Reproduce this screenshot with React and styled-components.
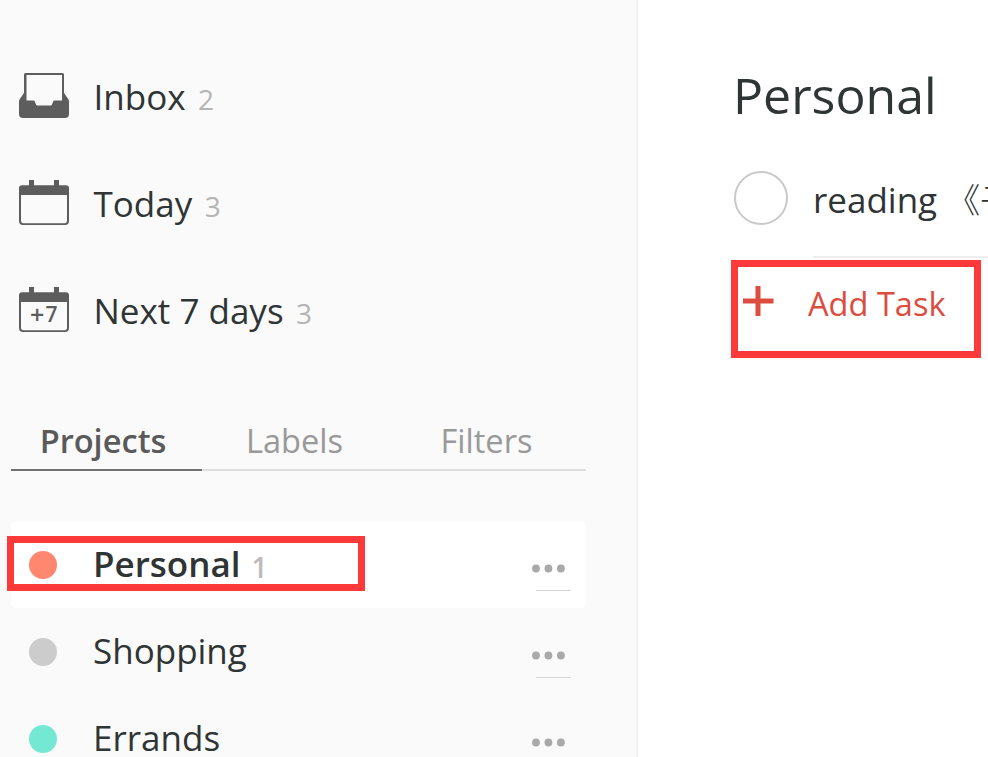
import React from "react";
import styled, { createGlobalStyle } from "styled-components";

const GlobalStyle = createGlobalStyle`
  * { box-sizing: border-box; }
  html, body { margin: 0; padding: 0; background: #fff; overflow: hidden; }
  button { font: inherit; color: inherit; background: none; border: 0; padding: 0; text-align: left; }
`;

const Page = styled.div`
  display: flex;
  width: 988px;
  height: 757px;
  overflow: hidden;
  background: #fff;
  color: #2f3435;
  font-family: "Open Sans", "Noto Sans CJK SC", sans-serif;
  font-size: 35px;
  line-height: 48px;
  white-space: nowrap;
`;

const Sidebar = styled.aside`
  flex: none;
  width: 638px;
  padding: 43px 50px 0 11px;
  background: #fafafa;
  border-right: 2px solid #f1f1f1;
`;

const NavList = styled.nav`
  display: flex;
  flex-direction: column;
`;

const NavItem = styled.button`
  display: flex;
  align-items: center;
  height: 107px;
  padding-left: 8px;

  svg {
    flex: none;
    width: 50px;
    height: 46px;
    margin: -2px 24.5px 0 0;
  }
`;

const Label = styled.span`
  font-weight: ${(p) => (p.$bold ? 600 : 400)};
`;

const Count = styled.span`
  margin: ${(p) => (p.$bold ? "6px 0 0 11px" : "4px 0 0 12.5px")};
  font-size: 28px;
  font-weight: ${(p) => (p.$bold ? 600 : 400)};
  color: ${(p) => (p.$bold ? "#bdbaba" : "#b5b5b5")};
`;

const Tabs = styled.div`
  display: flex;
  width: 575px;
  height: 62px;
  margin-top: 45px;
  border-bottom: 2px solid #dedede;
`;

const Tab = styled.button`
  flex: ${(p) => (p.$active ? "0 0 191px" : "1")};
  height: 62px;
  padding: 4px 7px 0 0;
  border-bottom: 2px solid ${(p) => (p.$active ? "#707070" : "transparent")};
  color: ${(p) => (p.$active ? "#5a5a5a" : "#999")};
  font-size: 32.6px;
  font-weight: ${(p) => (p.$active ? 600 : 400)};
  line-height: 56px;
  text-align: center;
`;

const ProjectList = styled.div`
  width: 575px;
  margin-top: 50px;
`;

const Project = styled.div`
  position: relative;
  display: flex;
  align-items: center;
  height: 87px;
  padding: 0 15px 2px 18px;
  border-radius: 5px;
  background: ${(p) => (p.$active ? "#fff" : "transparent")};
`;

const ColorDot = styled.span`
  width: 28px;
  height: 28px;
  margin: 3px 36px 0 0;
  border-radius: 50%;
  background: ${(p) => p.$color};
`;

const Menu = styled.button`
  align-self: flex-start;
  height: 70px;
  margin-left: auto;

  svg { display: block; width: 39px; height: 70px; }
`;

const Main = styled.main`
  flex: 1;
  min-width: 0;
  padding: 60px 0 0 96px;
`;

const Title = styled.h1`
  margin: 0 0 0 -1px;
  font-size: 50px;
  font-weight: 400;
  line-height: 70px;
`;

const Task = styled.div`
  display: flex;
  height: 128px;
`;

const Check = styled.span`
  flex: none;
  width: 54px;
  height: 54px;
  margin: 41px 25px 0 0;
  border: 2px solid #c9c9c9;
  border-radius: 50%;
`;

const TaskText = styled.div`
  flex: 1;
  min-width: 0;
  overflow: hidden;
  padding-top: 46px;
  border-bottom: 2px solid #eee;
`;

const Cjk = styled.span`
  margin-left: 9px;
  font-family: "Noto Sans CJK SC", sans-serif;
  font-size: 34px;
  font-weight: 300;
  line-height: 40px;
`;

const AddTask = styled.button`
  position: relative;
  display: flex;
  align-items: center;
  height: 91px;
  padding-left: 9px;
  color: #dc4c3f;
  font-size: 32.6px;

  svg { width: 31px; height: 31px; margin: -5px 34px 0 0; }
`;

const Highlight = styled.span`
  position: absolute;
  left: -4px;
  top: 15px;
  width: 358px;
  height: 55px;
  border: 7px solid #fd3939;
  pointer-events: none;
`;

const TaskHighlight = styled(Highlight)`
  left: -3px;
  top: 2px;
  width: 250px;
  height: 98px;
`;

const InboxIcon = () => (
  <svg viewBox="0 0 50 46" fill="#5d5d5d">
    <path
      fillRule="evenodd"
      d="M6.500 0h37q1.500 0 1.500 1.500V20l4.200 6q.8 1 .8 2.500V41q0 4-4 4H4q-4 0-4-4V28.500q0-1.500.8-2.500L5 20V1.500Q5 0 6.500 0ZM7.500 2v25.500h7q1 0 1.300 1l1.200 3q.4 1 1.400 1h13.200q1 0 1.400-1l1.200-3q.3-1 1.300-1h7.500V2Z"
    />
  </svg>
);

const CalendarIcon = ({ days }) => (
  <svg viewBox="0 0 50 46" fill="#5d5d5d">
    <path
      fillRule="evenodd"
      d="M10 0h5v5.300h20V0h5v5.300h7q3 0 3 3V41q0 4-4 4H4q-4 0-4-4V8.300q0-3 3-3h7ZM2 15v25.500Q2 43.200 4.500 43.200h41Q48 43.200 48 40.500V15Z"
    />
    {days && (
      <text fontWeight="600">
        <tspan x="11" y="37.200" fontSize="25">+</tspan>
        <tspan x="26.500" y="35" fontSize="21">{days}</tspan>
      </text>
    )}
  </svg>
);

const MoreIcon = () => (
  <svg viewBox="0 0 39 70" fill="#a9a9a9">
    <circle cx="4" cy="47.500" r="3.900" />
    <circle cx="16.400" cy="47.500" r="3.900" />
    <circle cx="28.900" cy="47.500" r="3.900" />
    <rect x="4" y="69" width="35" height="1" fill="#d4d4d4" />
  </svg>
);

const PlusIcon = () => (
  <svg viewBox="0 0 31 31" fill="#dc4c3f">
    <path d="M12.500 0h5v12.500H30.500v5h-13V30h-5V17.500H0v-5h12.500Z" />
  </svg>
);

const nav = [
  { name: "Inbox", count: 2, icon: <InboxIcon /> },
  { name: "Today", count: 3, icon: <CalendarIcon /> },
  { name: "Next 7 days", count: 3, icon: <CalendarIcon days={7} /> },
];

const projects = [
  { name: "Personal", count: 1, color: "#ff8770", active: true },
  { name: "Shopping", color: "#cccccc" },
  { name: "Errands", color: "#74e8d3" },
];

export default function App() {
  return (
    <>
      <GlobalStyle />
      <Page>
        <Sidebar>
          <NavList>
            {nav.map((item) => (
              <NavItem key={item.name}>
                {item.icon}
                <Label>{item.name}</Label>
                <Count>{item.count}</Count>
              </NavItem>
            ))}
          </NavList>
          <Tabs>
            <Tab $active>Projects</Tab>
            <Tab>Labels</Tab>
            <Tab>Filters</Tab>
          </Tabs>
          <ProjectList>
            {projects.map((p) => (
              <Project key={p.name} $active={p.active}>
                <ColorDot $color={p.color} />
                <Label $bold={p.active}>{p.name}</Label>
                {p.count && <Count $bold>{p.count}</Count>}
                <Menu aria-label="More">
                  <MoreIcon />
                </Menu>
                {p.active && <Highlight />}
              </Project>
            ))}
          </ProjectList>
        </Sidebar>
        <Main>
          <Title>Personal</Title>
          <Task>
            <Check />
            <TaskText>
              reading<Cjk>《子</Cjk>
            </TaskText>
          </Task>
          <AddTask>
            <PlusIcon />
            Add Task
            <TaskHighlight />
          </AddTask>
        </Main>
      </Page>
    </>
  );
}
